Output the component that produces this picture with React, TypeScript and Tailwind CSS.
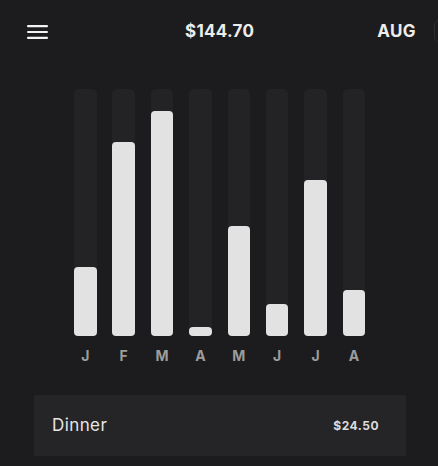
import { type FC } from "react";

const months = [
  { label: "J", value: 69 },
  { label: "F", value: 194 },
  { label: "M", value: 225 },
  { label: "A", value: 9 },
  { label: "M", value: 110 },
  { label: "J", value: 32 },
  { label: "J", value: 156 },
  { label: "A", value: 46 },
];

const MenuIcon: FC = () => (
  <svg width="21" height="14" viewBox="0 0 21 14" fill="none">
    <rect x="0" y="0" width="21" height="2.2" rx="1" fill="#f2f2f2" />
    <rect x="0" y="5.9" width="21" height="2.2" rx="1" fill="#f2f2f2" />
    <rect x="0" y="11.8" width="21" height="2.2" rx="1" fill="#f2f2f2" />
  </svg>
);

const Bar: FC<{ value: number }> = ({ value }) => (
  <div className="flex h-[247px] w-[22.5px] flex-col justify-end rounded-[5px] bg-[#232325]">
    <div
      className="w-full rounded-[4px] bg-[#e2e2e2]"
      style={{ height: value }}
    />
  </div>
);

export default function App() {
  return (
    <div className="relative h-[466px] w-[438px] overflow-hidden bg-[#1c1c1e] font-['Inter',sans-serif]">
      <header className="flex h-[62px] items-center justify-between pl-[27px] pr-[22px] pt-[2px]">
        <MenuIcon />
        <span className="ml-[14px] text-[17px] font-bold tracking-[0.3px] text-[#ececec]">
          $144.70
        </span>
        <span className="text-[17px] font-bold tracking-[0.4px] text-[#ececec]">
          AUG
        </span>
      </header>
      <div className="absolute right-[-6px] top-[20px] h-[22px] w-[10px] rounded-l-[5px] border border-[#2e2e30]" />

      <div className="mt-[27px] flex gap-[15.9px] pl-[74px]">
        {months.map((m, i) => (
          <Bar key={i} value={m.value} />
        ))}
      </div>
      <div className="mt-[12px] flex gap-[15.9px] pl-[74px]">
        {months.map((m, i) => (
          <span
            key={i}
            className="w-[22.5px] text-center text-[14px] font-bold leading-4 text-[#9c9c9c]"
          >
            {m.label}
          </span>
        ))}
      </div>

      <div className="ml-[34px] mt-[31px] flex h-[61px] w-[372px] items-center justify-between bg-[#252527] pl-[18px] pr-[27px]">
        <span className="text-[17px] tracking-[0.4px] text-[#e6e6e6]">Dinner</span>
        <span className="text-[12px] font-bold tracking-[0.5px] text-[#dcdcdc]">
          $24.50
        </span>
      </div>
    </div>
  );
}
